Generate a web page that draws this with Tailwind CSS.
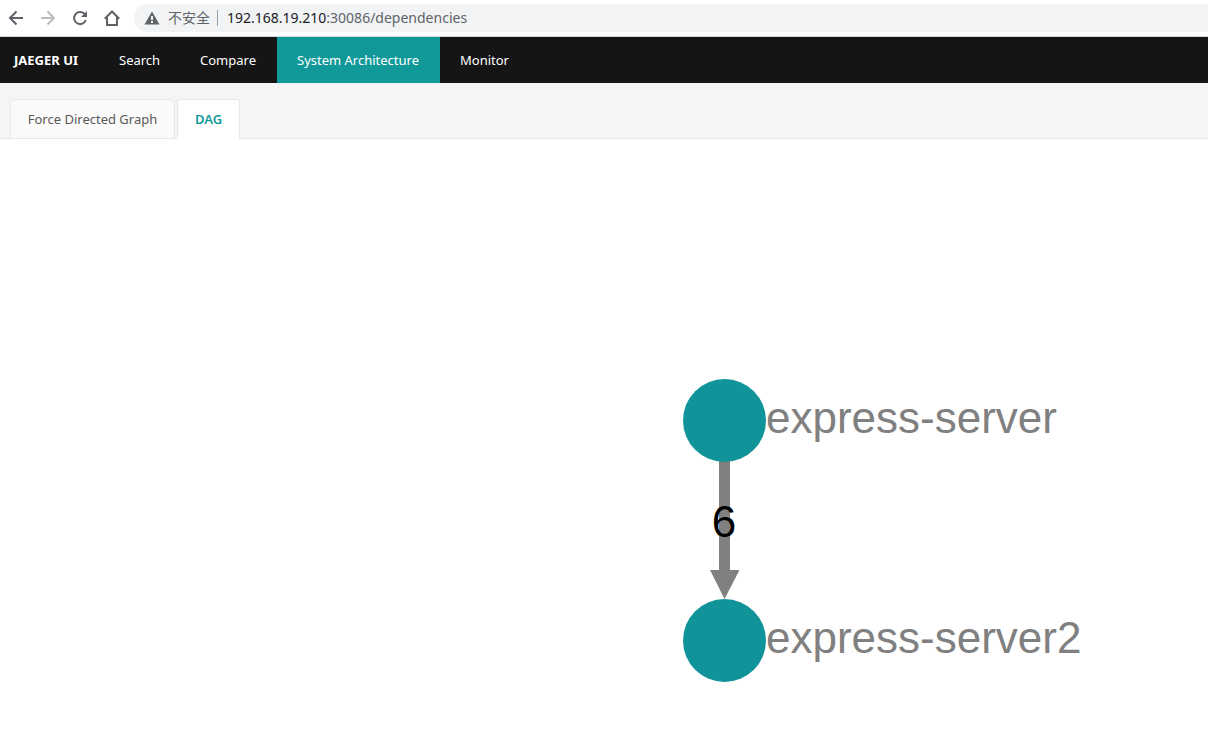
<!DOCTYPE html>
<html lang="en">
<head>
<meta charset="utf-8">
<title>Jaeger UI</title>
<script src="https://cdn.jsdelivr.net/npm/@tailwindcss/browser@4"></script>
</head>
<body class="flex min-h-screen flex-col bg-white font-['Noto_Sans','Noto_Sans_CJK_SC',sans-serif] text-[13px]">
  <header class="flex h-[37px] items-center border-b border-[#d5d7da] pl-2 text-[#5f6368]">
    <div class="flex gap-4">
      <button aria-label="Back" class="size-4"><svg viewBox="0 0 16 16" class="size-4" fill="none" stroke="currentColor" stroke-width="2"><path d="M15 8H2.5M8.5 1.5 2 8l6.500 6.500"/></svg></button>
      <button aria-label="Forward" class="size-4 text-[#babcbe]"><svg viewBox="0 0 16 16" class="size-4" fill="none" stroke="currentColor" stroke-width="2"><path d="M1 8h12.500M7.500 1.500 14 8l-6.500 6.500"/></svg></button>
      <button aria-label="Reload" class="size-4"><svg viewBox="0 0 16 16" class="size-4"><path d="M13.800 10A6 6 0 1 1 12.300 3.800L14 5.500" fill="none" stroke="currentColor" stroke-width="2"/><path d="M15 1v6H9z" fill="currentColor"/></svg></button>
      <button aria-label="Home" class="size-4"><svg viewBox="0 0 16 16" class="size-4" fill="none" stroke="currentColor" stroke-width="2"><path d="M.8 8.800 8 1.500l7.200 7.300M3 7.500V15h10V7.500"/></svg></button>
    </div>
    <div class="ml-3.5 flex h-7 flex-1 items-center rounded-l-full bg-[#f1f3f4] pl-2.5">
      <svg viewBox="0 0 16 16" class="size-4"><path d="M8 1.500 15.500 14.500H.5z" fill="currentColor"/><path d="M7 6h2v4H7zM7 11h2v2H7z" fill="#f1f3f4"/></svg>
      <span class="ml-2 w-[50px] border-r border-[#9aa0a6] text-sm leading-4">不安全</span>
      <a href="#" class="ml-[9px] text-sm"><span class="text-[#202124]">192.168.19.210</span>:30086/dependencies</a>
    </div>
  </header>
  <nav class="flex h-[46px] bg-[#151515] leading-[46px] text-white">
    <a href="#" class="w-[99px] pl-3.5 font-bold">JAEGER UI</a>
    <a href="#" class="w-[81px] pl-5">Search</a>
    <a href="#" class="w-[97px] pl-5">Compare</a>
    <a href="#" aria-current="page" class="w-[163px] bg-[#119999] pl-5">System Architecture</a>
    <a href="#" class="w-[90px] pl-5">Monitor</a>
  </nav>
  <div role="tablist" class="flex h-14 items-end gap-0.5 border-b border-[#e8e8e8] bg-[#f5f5f5] pl-2.5">
    <button role="tab" aria-selected="false" class="-mb-px h-10 w-[165px] rounded-t border border-[#e8e8e8] bg-[#fafafa] pt-0.5 text-[#595959]">Force Directed Graph</button>
    <button role="tab" aria-selected="true" class="-mb-px h-10 w-[63px] rounded-t border border-[#e8e8e8] border-b-white bg-white pt-0.5 font-semibold text-[#119999]">DAG</button>
  </div>
  <main class="flex flex-1">
    <svg role="img" aria-label="Service dependency graph" class="h-[600px] w-full flex-1 font-['Liberation_Sans',Arial,sans-serif] text-[44px]">
      <path d="M724.500 322V432" stroke="#808080" stroke-width="11"/>
      <path d="M710 431h29.500L724.500 460z" fill="#808080"/>
      <circle cx="724.500" cy="281.500" r="41.500" fill="#11939a"/>
      <circle cx="724.500" cy="501.500" r="41.500" fill="#11939a"/>
      <text x="724" y="398" text-anchor="middle">6</text>
      <text x="766" y="294" fill="#808080">express-server</text>
      <text x="766" y="514" fill="#808080">express-server2</text>
    </svg>
  </main>
</body>
</html>
